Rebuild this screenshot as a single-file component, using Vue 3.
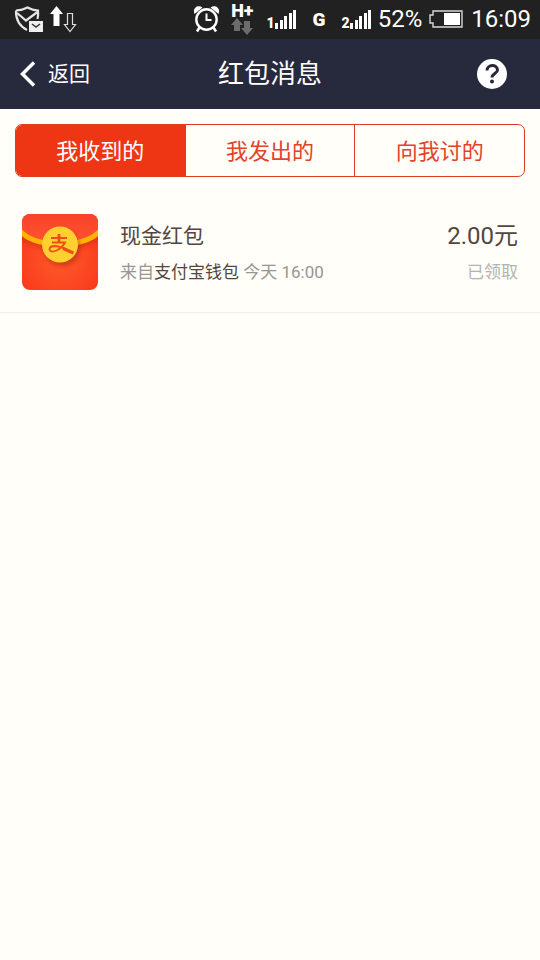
<script setup>
import { ref } from 'vue'

const tabs = ['我收到的', '我发出的', '向我讨的']
const active = ref(0)
const messages = [
  { title: '现金红包', sender: '支付宝钱包', time: '今天 16:00', amount: '2.00元', state: '已领取' },
]
const sims = [1, 2]
</script>

<template>
  <div class="page">
    <div class="status">
      <div class="group notices">
        <svg width="29" height="28" viewBox="0 0 29 28" fill="none" aria-hidden="true">
          <path d="M2 4.500 Q9 4 13.500 1.500 Q18 4 24 4.500 Q24.500 9 23.500 13 M2 4.500 Q1.500 18 13 24" stroke="#e6e6e6" stroke-width="2.200" />
          <path d="M3 7 L12 14.500 L23.500 6" stroke="#e6e6e6" stroke-width="2.200" />
          <rect x="15" y="15" width="14" height="11" fill="#eee" />
          <path d="M18 18 L22 21 L26 18" stroke="#333" stroke-width="1.400" />
        </svg>
        <svg width="27" height="28" viewBox="0 0 27 28" aria-hidden="true">
          <path d="M6.500 0 L13 8 H9.500 V20 H3.500 V8 H0 Z" fill="#fff" />
          <path d="M17.500 7.500 H22.500 V18.500 H25.500 L20 25.500 L14.500 18.500 H17.500 Z" fill="none" stroke="#ddd" stroke-width="1.200" />
        </svg>
      </div>
      <div class="group">
        <svg width="27" height="30" viewBox="0 0 27 30" fill="none" aria-hidden="true">
          <path d="M1.500 9 C-1 3 5 -1 9.500 2.500 Z M25.500 9 C28 3 22 -1 17.500 2.500 Z" fill="#fff" />
          <circle cx="13.500" cy="14.500" r="10.200" fill="#212121" stroke="#fff" stroke-width="2.400" />
          <path d="M13.500 8.500 V15 H18.500" stroke="#fff" stroke-width="2" />
          <path d="M6.500 22.500 L4 26.500 M20.500 22.500 L23 26.500" stroke="#fff" stroke-width="2.500" />
        </svg>
        <div class="network">
          <span>H+</span>
          <svg width="22" height="17" viewBox="0 0 22 17" fill="#6c6c6c" aria-hidden="true">
            <path d="M6 0 L12 7 H9 V13 H3 V7 H0 Z M13 3 H19 V10 H22 L16 17 L10 10 H13 Z" />
          </svg>
        </div>
        <template v-for="sim in sims" :key="sim">
          <span v-if="sim === 2" class="gprs">G</span>
          <div class="signal">
            <span>{{ sim }}</span>
            <svg width="22" height="19" viewBox="0 1 22 19" fill="#fff" aria-hidden="true">
              <path d="M0 14 H3 V20 H0 Z M5 11 H8 V20 H5 Z M9 7 H12 V20 H9 Z M14 4 H17 V20 H14 Z M18 1 H21 V20 H18 Z" />
            </svg>
          </div>
        </template>
        <span class="battery-text">52%</span>
        <svg class="battery" width="34" height="19" viewBox="0 0 34 19" aria-hidden="true">
          <path d="M4 1 H33 V17 H4 V13 H1 V5 H4 Z" fill="none" stroke="#d8d8d8" stroke-width="1.400" />
          <rect x="15" y="3" width="16" height="12" fill="#fff" />
        </svg>
        <span class="clock">16:09</span>
      </div>
    </div>

    <header class="header">
      <button class="back" type="button">
        <svg width="16" height="26" viewBox="0 0 16 26" fill="none" aria-hidden="true">
          <path d="M14 1.500 L2.500 13 L14 24.500" stroke="#fff" stroke-width="3.500" />
        </svg>
        <span>返回</span>
      </button>
      <h1>红包消息</h1>
      <button class="help" type="button" aria-label="帮助">
        <svg width="32" height="32" viewBox="0 0 32 32" aria-hidden="true">
          <circle cx="16" cy="16" r="15" fill="#fff" />
          <path d="M11 12.500 C11 6 21.500 6 21.500 12 C21.500 15.500 16 15.500 16 19.500" fill="none" stroke="#26283a" stroke-width="3" />
          <circle cx="16" cy="23.500" r="2" fill="#26283a" />
        </svg>
      </button>
    </header>

    <main>
      <nav class="tabs">
        <button
          v-for="(tab, i) in tabs"
          :key="tab"
          type="button"
          :class="{ active: active === i }"
          :aria-pressed="active === i"
          @click="active = i"
        >{{ tab }}</button>
      </nav>

      <ul class="list">
        <li v-for="m in messages" :key="m.title" class="item">
          <svg class="packet" width="76" height="76" viewBox="0 0 76 76" aria-hidden="true">
            <defs>
              <radialGradient id="body" cx="50%" cy="60%" r="62%">
                <stop offset="0" stop-color="#ff5a29" />
                <stop offset="1" stop-color="#f93a1d" />
              </radialGradient>
              <linearGradient id="flap" x1="0" y1="0" x2="0" y2="1">
                <stop offset="0" stop-color="#f8422a" />
                <stop offset="1" stop-color="#ff5530" />
              </linearGradient>
              <filter id="soft" x="-30%" y="-30%" width="160%" height="160%">
                <feGaussianBlur stdDeviation="2" />
              </filter>
              <clipPath id="card"><rect width="76" height="76" rx="8" /></clipPath>
            </defs>
            <g clip-path="url(#card)">
              <rect width="76" height="76" fill="url(#body)" />
              <path d="M-4 20 Q12 34 38 34 Q64 34 80 20" fill="none" stroke="#b82a10" stroke-opacity=".4" stroke-width="5" filter="url(#soft)" />
              <path d="M0 0 H76 V18 Q64 30 38 30 Q12 30 0 18 Z" fill="url(#flap)" />
              <path d="M-2 17 Q10 30 38 30 Q66 30 78 17" fill="none" stroke="#ffb400" stroke-width="5" />
              <circle cx="40" cy="34" r="18" fill="#a82510" fill-opacity=".55" filter="url(#soft)" />
              <circle cx="38" cy="30.500" r="18" fill="#ffd02f" />
              <g fill="none" stroke="#f04e14">
                <path d="M29 24 H45" stroke-width="2" />
                <path d="M37 20 V28" stroke-width="2.800" />
                <path d="M30 28.500 H43 Q40 34 34.500 36.500 Q28.500 39 27.500 35.500 Q27.500 32 33 32 Q39 32.500 47 36.500" stroke-width="1.800" />
                <path d="M41 34.500 L51.500 39" stroke-width="3" />
              </g>
            </g>
          </svg>
          <div class="info">
            <h2>{{ m.title }}</h2>
            <p>来自<b>{{ m.sender }}</b> {{ m.time }}</p>
          </div>
          <div class="result">
            <strong>{{ m.amount }}</strong>
            <span>{{ m.state }}</span>
          </div>
        </li>
      </ul>
    </main>
  </div>
</template>

<style>
body {
  background: #fffef9;
}
</style>

<style scoped>
.page {
  min-height: 100vh;
  background: #fffef9;
  color: #54463f;
  font-family: Roboto, "Noto Sans CJK SC", sans-serif;
}
svg {
  display: block;
  flex: none;
}
button {
  padding: 0;
  border: 0;
  background: none;
  color: inherit;
  font: inherit;
  cursor: pointer;
}
h1, h2, p, ul {
  margin: 0;
  padding: 0;
  font-weight: 400;
}
.status {
  display: flex;
  justify-content: space-between;
  align-items: center;
  height: 39px;
  padding: 0 9px 0 14px;
  background: #212121;
  color: #fff;
}
.group {
  display: flex;
  align-items: center;
  gap: 6px;
}
.notices {
  gap: 7px;
}
.network {
  display: flex;
  flex-direction: column;
  align-items: center;
  margin: 0 7px 0 5px;
  font-size: 18px;
  font-weight: 900;
  line-height: 14px;
}
.signal {
  display: flex;
  align-items: flex-end;
  font-size: 14px;
  font-weight: 900;
  line-height: 12px;
}
.gprs {
  margin: 0 10px;
  font-size: 19px;
  font-weight: 900;
}
.battery {
  margin: 0 2px 0 1px;
}
.battery-text,
.clock {
  font-size: 24px;
  line-height: 39px;
}
.header {
  display: grid;
  grid-template-columns: 1fr auto 1fr;
  align-items: center;
  height: 70px;
  padding: 0 20px;
  background: #272a3c;
  color: #fff;
}
.header h1 {
  font-size: 26px;
  line-height: 40px;
}
.back {
  display: flex;
  align-items: center;
  justify-self: start;
  gap: 12px;
  font-size: 21px;
  line-height: 28px;
}
.help {
  justify-self: end;
  margin-right: 12px;
}
.tabs {
  display: flex;
  margin: 15px 15px 0;
  border: 1px solid #dc3c24;
  border-radius: 7px;
  overflow: hidden;
}
.tabs button {
  flex: 1;
  height: 51px;
  padding-bottom: 3px;
  color: #e2432b;
  font-size: 22px;
}
.tabs button + button {
  border-left: 1px solid #dc3c24;
}
.tabs .active {
  background: #ee3615;
  color: #fff;
}
.list {
  margin-top: 14px;
  list-style: none;
}
.item {
  display: flex;
  align-items: center;
  gap: 22px;
  padding: 23px 22px 22px;
  border-bottom: 1px solid #efefeb;
}
.info,
.result {
  padding-top: 2px;
}
.info {
  flex: 1;
}
.info h2 {
  font-size: 21px;
  line-height: 38px;
}
.info p,
.result span {
  color: #999590;
  font-size: 17px;
  line-height: 34px;
}
.info b {
  color: #54463f;
  font-weight: 400;
}
.result {
  display: flex;
  flex-direction: column;
  align-items: flex-end;
}
.result strong {
  font-size: 24px;
  font-weight: 400;
  line-height: 38px;
}
.result span {
  color: #b5b3af;
}
</style>
